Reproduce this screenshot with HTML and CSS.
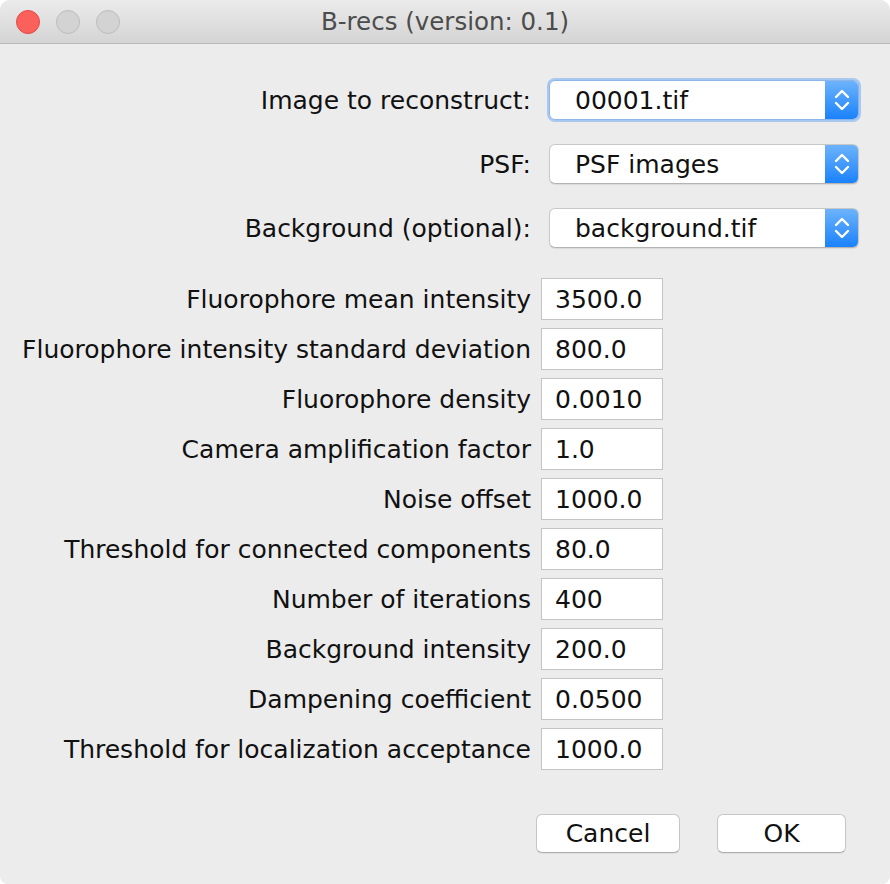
FILE: index.html
```html
<!DOCTYPE html>
<html>
<head>
<meta charset="utf-8">
<link rel="stylesheet" href="styles.css">
</head>
<body>
<div class="window">
  <div class="titlebar">
    <div class="lights">
      <span class="light close"></span>
      <span class="light"></span>
      <span class="light"></span>
    </div>
    <div class="title">B-recs (version: 0.1)</div>
  </div>
  <div class="content">
    <div class="selects">
      <label class="label">Image to reconstruct:</label>
      <div class="select focused"><span class="sel-text">00001.tif</span><span class="arrows"><svg width="16" height="26" viewBox="0 0 16 26"><path d="M2 10 L8 4 L14 10 M2 16 L8 22 L14 16" fill="none" stroke="#fff" stroke-width="2.4" stroke-linecap="round" stroke-linejoin="round"/></svg></span></div>
      <label class="label">PSF:</label>
      <div class="select"><span class="sel-text">PSF images</span><span class="arrows"><svg width="16" height="26" viewBox="0 0 16 26"><path d="M2 10 L8 4 L14 10 M2 16 L8 22 L14 16" fill="none" stroke="#fff" stroke-width="2.4" stroke-linecap="round" stroke-linejoin="round"/></svg></span></div>
      <label class="label">Background (optional):</label>
      <div class="select"><span class="sel-text">background.tif</span><span class="arrows"><svg width="16" height="26" viewBox="0 0 16 26"><path d="M2 10 L8 4 L14 10 M2 16 L8 22 L14 16" fill="none" stroke="#fff" stroke-width="2.4" stroke-linecap="round" stroke-linejoin="round"/></svg></span></div>
    </div>
    <div class="fields">
      <label class="label">Fluorophore mean intensity</label><div class="field">3500.0</div>
      <label class="label">Fluorophore intensity standard deviation</label><div class="field">800.0</div>
      <label class="label">Fluorophore density</label><div class="field">0.0010</div>
      <label class="label">Camera amplification factor</label><div class="field">1.0</div>
      <label class="label">Noise offset</label><div class="field">1000.0</div>
      <label class="label">Threshold for connected components</label><div class="field">80.0</div>
      <label class="label">Number of iterations</label><div class="field">400</div>
      <label class="label">Background intensity</label><div class="field">200.0</div>
      <label class="label">Dampening coefficient</label><div class="field">0.0500</div>
      <label class="label">Threshold for localization acceptance</label><div class="field">1000.0</div>
    </div>
    <div class="buttons">
      <button class="btn cancel">Cancel</button>
      <button class="btn ok">OK</button>
    </div>
  </div>
</div>
</body>
</html>
```
FILE: styles.css
```css
html, body {
  margin: 0;
  padding: 0;
  background: #ffffff;
}
body {
  font-family: "DejaVu Sans", "Liberation Sans", sans-serif;
  font-size: 25px;
  color: #111;
}
.window {
  width: 890px;
  height: 884px;
  background: #ececec;
  border-radius: 10px 10px 8px 8px;
  overflow: hidden;
  display: flex;
  flex-direction: column;
}
.titlebar {
  height: 43px;
  flex: none;
  border-bottom: 1px solid #b9b9b9;
  background: linear-gradient(#ebebeb, #d4d4d4);
  display: flex;
  align-items: center;
  position: relative;
}
.lights {
  display: flex;
  gap: 16px;
  padding-left: 16px;
}
.light {
  width: 22px;
  height: 22px;
  border-radius: 50%;
  background: #d3d3d3;
  border: 1px solid #bcbcbc;
}
.light.close {
  background: #fc605b;
  border-color: #de4b47;
}
.title {
  position: absolute;
  left: 0;
  right: 0;
  top: 0;
  bottom: 0;
  display: flex;
  align-items: center;
  justify-content: center;
  color: #4c4c4c;
  font-size: 24.5px;
  font-family: "DejaVu Sans", sans-serif;
}
.content {
  display: flex;
  flex-direction: column;
  padding-top: 36px;
}
.label {
  text-align: right;
  white-space: nowrap;
}
.selects {
  display: grid;
  grid-template-columns: 531px 310px;
  column-gap: 18px;
  row-gap: 24px;
  align-items: center;
}
.select {
  height: 38px;
  background: #fff;
  border: 1px solid #c8c8c8;
  border-bottom-color: #b4b4b4;
  border-radius: 6px;
  display: flex;
  align-items: center;
  overflow: hidden;
  box-shadow: 0 1px 1px rgba(0,0,0,0.08);
}
.select.focused {
  border-color: #8db5ea;
  box-shadow: 0 0 0 2px #a9c8f0;
}
.sel-text {
  flex: 1;
  padding-left: 25px;
}
.arrows {
  width: 33px;
  align-self: stretch;
  background: linear-gradient(#6db3fb, #1a82fb);
  display: flex;
  align-items: center;
  justify-content: center;
}
.fields {
  display: grid;
  grid-template-columns: 531px 122px;
  column-gap: 10px;
  row-gap: 8px;
  align-items: center;
  margin-top: 30px;
}
.field {
  box-sizing: border-box;
  height: 42px;
  background: #fff;
  border: 1px solid #c4c4c4;
  display: flex;
  align-items: center;
  padding-left: 13px;
}
.buttons {
  display: flex;
  justify-content: flex-end;
  gap: 37px;
  padding-right: 44px;
  margin-top: 44px;
}
.btn {
  font-family: inherit;
  font-size: 25px;
  color: #111;
  height: 39px;
  background: #fff;
  border: 1px solid #c6c6c6;
  border-bottom-color: #aeaeae;
  border-radius: 6px;
  box-shadow: 0 1px 1px rgba(0,0,0,0.06);
  padding: 0;
}
.cancel { width: 144px; }
.ok { width: 129px; }
```
